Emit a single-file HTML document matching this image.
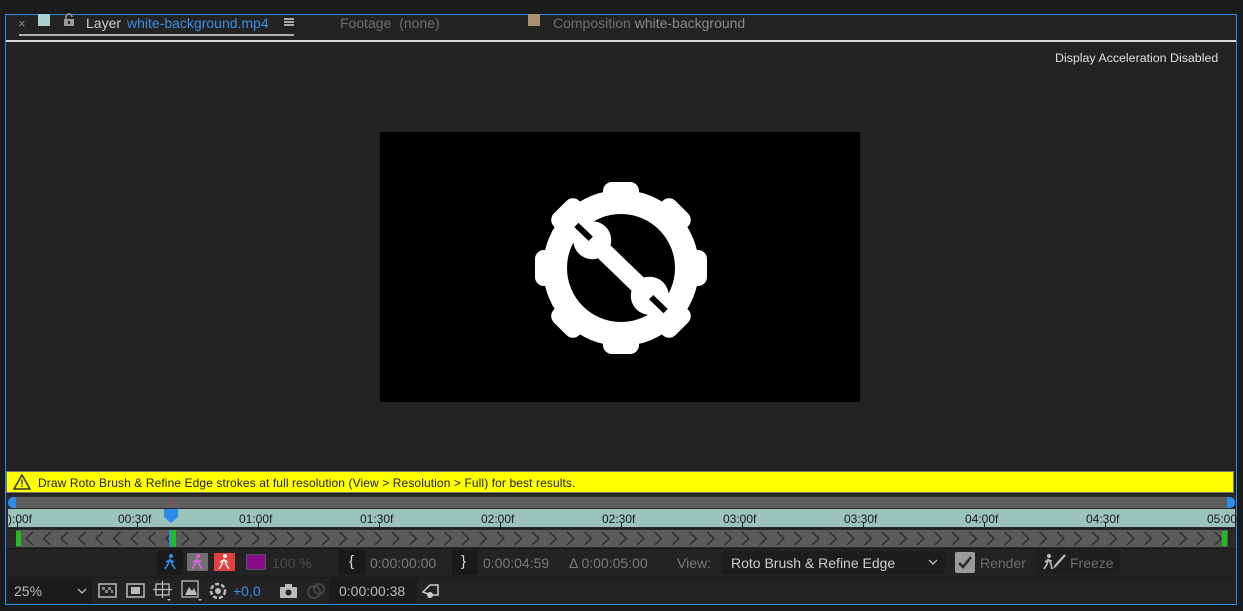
<!DOCTYPE html>
<html><head><meta charset="utf-8"><style>
*{margin:0;padding:0;box-sizing:border-box}
body{width:1243px;height:611px;background:#1b1b1b;font-family:"Liberation Sans",sans-serif;position:relative;overflow:hidden;color:#9a9a9a}
.a{position:absolute}
.t{font-size:14px;white-space:nowrap}
</style></head><body>
<div class="a" style="left:5px;top:0;width:1232px;height:14px;background:#1b1b1b"></div>
<div class="a" style="left:5px;top:14px;width:1232px;height:591px;border:1px solid #2d8ceb;background:#232323"></div>
<div class="a" style="left:6px;top:15px;width:1230px;height:25px;background:#232323"></div>
<div class="a" style="left:6px;top:40px;width:1230px;height:2px;background:#d8d8d8"></div>
<div class="a t" style="left:18px;top:16px;color:#8a8a8a;font-size:13px">×</div>
<div class="a" style="left:38px;top:14px;width:12px;height:12px;background:#a9d0cc"></div>
<svg class="a" style="left:63px;top:13px" width="12" height="14"><rect x="1" y="6" width="10" height="7" fill="#9a9a9a"/><path d="M3 6V4a3 3 0 0 1 6 0" stroke="#9a9a9a" stroke-width="1.6" fill="none"/><rect x="5" y="8" width="2" height="3" fill="#232323"/></svg>
<div class="a t" style="left:86px;top:15px;color:#d0d0d0">Layer</div>
<div class="a t" style="left:127px;top:15px;color:#3b8fe8">white-background.mp4</div>
<div class="a" style="left:284px;top:18px;width:10px;height:1.5px;background:#aaa;box-shadow:0 3px 0 #aaa,0 6px 0 #aaa"></div>
<div class="a" style="left:19px;top:34px;width:275px;height:2px;background:#b0b0b0"></div>
<div class="a t" style="left:340px;top:15px;color:#6e6e6e">Footage &nbsp;(none)</div>
<div class="a" style="left:528px;top:14px;width:12px;height:12px;background:#a89272"></div>
<div class="a t" style="left:553px;top:15px;color:#6e6e6e">Composition <span style="color:#8a8a8a">white-background</span></div>
<div class="a" style="left:1055px;top:51px;font-size:12.4px;color:#e0e0e0">Display Acceleration Disabled</div>
<div class="a" style="left:380px;top:132px;width:480px;height:270px;background:#000"></div>
<svg class="a" style="left:380px;top:132px" width="480" height="270" viewBox="380 132 480 270">
<g transform="translate(621,268)" fill="#fff">
<circle r="78"/>
<g id="tooth"><rect x="-18" y="-86" width="36" height="28" rx="9"/></g>
<use href="#tooth" transform="rotate(45)"/><use href="#tooth" transform="rotate(90)"/><use href="#tooth" transform="rotate(135)"/>
<use href="#tooth" transform="rotate(180)"/><use href="#tooth" transform="rotate(225)"/><use href="#tooth" transform="rotate(270)"/><use href="#tooth" transform="rotate(315)"/>
<circle r="54" fill="#000"/>
<g transform="rotate(44)">
<rect x="-38" y="-9" width="76" height="18"/>
<circle cx="-40" cy="0" r="19"/><circle cx="40" cy="0" r="19"/>
<rect x="-62" y="-3" width="20" height="6" fill="#000"/>
<rect x="42" y="-3" width="20" height="6" fill="#000"/>
</g>
</g>
</svg>
<div class="a" style="left:6px;top:471px;width:1228px;height:22px;background:#ffff00;border:1px solid #777"></div>
<svg class="a" style="left:13px;top:474px" width="18" height="16"><path d="M9 1L17 15H1Z" fill="none" stroke="#333" stroke-width="1.5"/><rect x="8.3" y="5.5" width="1.4" height="5" fill="#333"/><rect x="8.3" y="11.5" width="1.4" height="1.5" fill="#333"/></svg>
<div class="a" style="left:38px;top:476px;font-size:12px;color:#222;letter-spacing:0.1px">Draw Roto Brush &amp; Refine Edge strokes at full resolution (View &gt; Resolution &gt; Full) for best results.</div>
<div class="a" style="left:6px;top:495px;width:1230px;height:53px;background:#2a2a2a"></div>
<div class="a" style="left:16px;top:497px;width:1211px;height:11px;background:#5f5f5f"></div>
<div class="a" style="left:8px;top:497px;width:8px;height:11px;background:#2d8ceb;border-radius:5px 0 0 5px"></div>
<div class="a" style="left:1227px;top:497px;width:8px;height:11px;background:#2d8ceb;border-radius:0 5px 5px 0"></div>
<div class="a" style="left:170px;top:499px;width:1px;height:7px;background:#d03030"></div>
<div class="a" style="left:8px;top:509px;width:1227px;height:18px;background:#9cc3bb"></div>
<svg class="a" style="left:0;top:509px" width="1243" height="18">
<g stroke="#222" stroke-width="1">
<line x1="17.5" y1="12" x2="17.5" y2="18"/><line x1="137.5" y1="13" x2="137.5" y2="18"/><line x1="258.5" y1="13" x2="258.5" y2="18"/><line x1="379.5" y1="13" x2="379.5" y2="18"/><line x1="500.5" y1="13" x2="500.5" y2="18"/><line x1="621.5" y1="13" x2="621.5" y2="18"/><line x1="742.5" y1="13" x2="742.5" y2="18"/><line x1="863.5" y1="13" x2="863.5" y2="18"/><line x1="984.5" y1="13" x2="984.5" y2="18"/><line x1="1105.5" y1="13" x2="1105.5" y2="18"/>
</g>
<g font-family="Liberation Sans" font-size="12" fill="#1a1a1a">
<text x="8" y="14">):00f</text><text x="118" y="14">00:30f</text><text x="239" y="14">01:00f</text><text x="360" y="14">01:30f</text><text x="481" y="14">02:00f</text><text x="602" y="14">02:30f</text><text x="723" y="14">03:00f</text><text x="844" y="14">03:30f</text><text x="965" y="14">04:00f</text><text x="1086" y="14">04:30f</text><text x="1207" y="14">05:00</text>
</g>
<path d="M164 0h14v8l-7 6l-7-6z" fill="#2d8ceb"/>
</svg>
<div class="a" style="left:8px;top:528px;width:1227px;height:1px;background:#1e1e1e"></div>
<svg class="a" style="left:0;top:530px" width="1243" height="17">
<defs>
<pattern id="pl" x="21" y="0" width="17.5" height="17" patternUnits="userSpaceOnUse"><path d="M12 2L5 8.5L12 15" stroke="#2a2a2a" stroke-width="1.3" fill="none"/></pattern>
<pattern id="pr" x="177" y="0" width="17.5" height="17" patternUnits="userSpaceOnUse"><path d="M5 2L12 8.5L5 15" stroke="#2a2a2a" stroke-width="1.3" fill="none"/></pattern>
</defs>
<rect x="16" y="0" width="1212" height="17" fill="#5b5b5b"/>
<rect x="21" y="0" width="148" height="17" fill="url(#pl)"/>
<rect x="177" y="0" width="1048" height="17" fill="url(#pr)"/>
<rect x="16" y="1" width="5" height="15" fill="#1fbf1f"/>
<rect x="1222" y="1" width="5" height="15" fill="#1fbf1f"/>
<rect x="170" y="0" width="6" height="17" fill="#1fbf1f"/><rect x="169" y="0" width="2" height="17" fill="#2d8ceb"/>
</svg>
<div class="a" style="left:6px;top:548px;width:1230px;height:28px;background:#232323;border-top:1px solid #191919"></div>
<div class="a" style="left:157px;top:550px;width:26px;height:25px;background:#1a1a1a;border-radius:2px"></div>
<svg class="a" style="left:163px;top:553px" width="14" height="18"><circle cx="8" cy="3" r="2" fill="#2d8ceb"/><path d="M7 6L5 11L2 16M7 6L9 11L12 16M3 9L7 7L11 9" stroke="#2d8ceb" stroke-width="1.6" fill="none"/></svg>
<div class="a" style="left:187px;top:553px;width:21px;height:18px;background:#707070"></div>
<svg class="a" style="left:190px;top:553px" width="14" height="18"><circle cx="8" cy="3" r="2" fill="#e060e0"/><path d="M7 6L5 11L2 16M7 6L9 11L12 16M3 9L7 7L11 9" stroke="#e060e0" stroke-width="1.6" fill="none"/></svg>
<div class="a" style="left:214px;top:553px;width:21px;height:18px;background:#e04040"></div>
<svg class="a" style="left:217px;top:553px" width="14" height="18"><circle cx="8" cy="3" r="2" fill="#eee"/><path d="M7 6L5 11L2 16M7 6L9 11L12 16M3 9L7 7L11 9" stroke="#eee" stroke-width="1.4" fill="none"/></svg>
<div class="a" style="left:246px;top:554px;width:20px;height:16px;background:#8a0e8a;border:1px solid #555"></div>
<div class="a t" style="left:272px;top:555px;color:#4c4c4c">100 %</div>
<div class="a" style="left:339px;top:550px;width:26px;height:25px;background:#1a1a1a"></div>
<div class="a" style="left:349px;top:553px;font-size:15px;color:#ddd">{</div>
<div class="a t" style="left:370px;top:555px;color:#7a7a7a">0:00:00:00</div>
<div class="a" style="left:452px;top:550px;width:26px;height:25px;background:#1a1a1a"></div>
<div class="a" style="left:461px;top:553px;font-size:15px;color:#ddd">}</div>
<div class="a t" style="left:483px;top:555px;color:#7a7a7a">0:00:04:59</div>
<div class="a t" style="left:569px;top:555px;color:#7a7a7a">Δ 0:00:05:00</div>
<div class="a t" style="left:677px;top:555px;color:#7a7a7a">View:</div>
<div class="a" style="left:722px;top:551px;width:223px;height:23px;background:#1d1d1d;border-radius:2px"></div>
<div class="a t" style="left:731px;top:555px;color:#cfcfcf">Roto Brush &amp; Refine Edge</div>
<svg class="a" style="left:928px;top:558px" width="10" height="8"><path d="M1 2L5 6L9 2" stroke="#bbb" stroke-width="1.3" fill="none"/></svg>
<div class="a" style="left:955px;top:552px;width:20px;height:21px;background:#9a9a9a;border-radius:2px"></div>
<svg class="a" style="left:957px;top:555px" width="16" height="15"><path d="M2 8L6 12L14 2" stroke="#2a2a2a" stroke-width="2.5" fill="none"/></svg>
<div class="a t" style="left:980px;top:555px;color:#6e6e6e">Render</div>
<div class="a" style="left:1036px;top:550px;width:84px;height:24px;background:#1f1f1f;border-radius:2px"></div>
<svg class="a" style="left:1043px;top:553px" width="24" height="18"><circle cx="6" cy="3" r="2" fill="#bbb"/><path d="M5 6L4 11L1 16M5 6L8 11L9 16M2 9L5 7L9 8" stroke="#bbb" stroke-width="1.6" fill="none"/><path d="M22 2L13 12" stroke="#bbb" stroke-width="2.2"/><path d="M12 11l2 2-4 3z" fill="#bbb"/></svg>
<div class="a t" style="left:1070px;top:555px;color:#6e6e6e">Freeze</div>
<div class="a" style="left:6px;top:577px;width:1230px;height:27px;background:#232323;border-top:1px solid #191919"></div>
<div class="a" style="left:8px;top:579px;width:84px;height:24px;background:#1b1b1b"></div>
<div class="a t" style="left:14px;top:583px;color:#bbb">25%</div>
<svg class="a" style="left:77px;top:587px" width="10" height="8"><path d="M1 2L5 6L9 2" stroke="#bbb" stroke-width="1.3" fill="none"/></svg>
<svg class="a" style="left:98px;top:582px" width="20" height="18"><rect x="1" y="2" width="17" height="13" fill="none" stroke="#bbb" stroke-width="1.5"/><rect x="4" y="5" width="3" height="3" fill="#888"/><rect x="10" y="5" width="3" height="3" fill="#888"/><rect x="7" y="8" width="3" height="3" fill="#888"/><rect x="13" y="8" width="2" height="3" fill="#888"/></svg>
<svg class="a" style="left:126px;top:582px" width="20" height="18"><rect x="1" y="2" width="17" height="13" fill="none" stroke="#bbb" stroke-width="1.5"/><rect x="5" y="5" width="9" height="7" fill="#bbb"/></svg>
<svg class="a" style="left:152px;top:580px" width="22" height="22"><rect x="4" y="4" width="13" height="11" fill="none" stroke="#bbb" stroke-width="1.3"/><path d="M1 9.5h19M10.5 1v17" stroke="#bbb" stroke-width="1.2"/><path d="M15 19l2 2 2-2z" fill="#bbb"/></svg>
<svg class="a" style="left:181px;top:580px" width="22" height="22"><rect x="1" y="1" width="16" height="16" fill="none" stroke="#bbb" stroke-width="1.3"/><path d="M4 15l4-8 3 4 2-3 3 7z" fill="#bbb"/><path d="M17 19l2 2 2-2z" fill="#bbb"/></svg>
<svg class="a" style="left:209px;top:582px" width="18" height="18"><circle cx="9" cy="9" r="7" fill="none" stroke="#bbb" stroke-width="2.5" stroke-dasharray="4 2"/><circle cx="9" cy="9" r="3" fill="#bbb"/></svg>
<div class="a t" style="left:233px;top:583px;color:#3b8fe8">+0,0</div>
<svg class="a" style="left:279px;top:583px" width="20" height="16"><rect x="1" y="4" width="17" height="11" rx="1" fill="#bbb"/><rect x="6" y="1" width="7" height="4" fill="#bbb"/><circle cx="9.5" cy="9.5" r="3" fill="#232323"/></svg>
<svg class="a" style="left:306px;top:583px" width="20" height="16"><circle cx="8" cy="9" r="6" fill="none" stroke="#444" stroke-width="2"/><circle cx="13" cy="6" r="5" fill="none" stroke="#444" stroke-width="2"/></svg>
<div class="a" style="left:329px;top:579px;width:88px;height:24px;background:#1b1b1b"></div>
<div class="a t" style="left:339px;top:583px;color:#bbb">0:00:00:38</div>
<svg class="a" style="left:421px;top:582px" width="20" height="18"><path d="M2 10L9 3H17V13H9Z" fill="none" stroke="#ccc" stroke-width="1.5"/><circle cx="9" cy="13" r="3" fill="#ccc"/></svg>
</body></html>
